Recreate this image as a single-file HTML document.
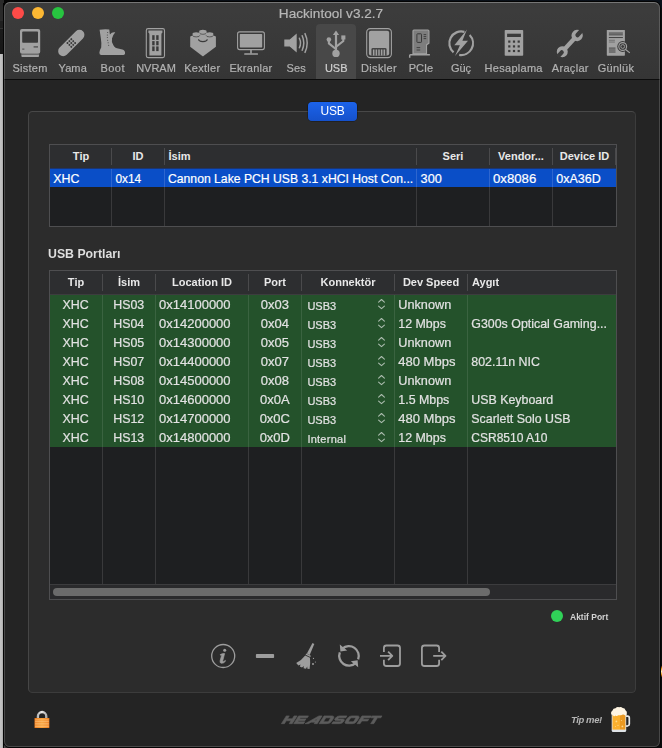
<!DOCTYPE html>
<html>
<head>
<meta charset="utf-8">
<title>Hackintool v3.2.7</title>
<style>
*{box-sizing:border-box;margin:0;padding:0}
html,body{width:662px;height:748px;overflow:hidden;background:#bdbdbd;font-family:"Liberation Sans",sans-serif;color:#dcdcdc}
.abs{position:absolute}
#win{opacity:.9999}
#bg-top{left:3px;top:0;width:659px;height:8px;background:linear-gradient(90deg,#050505 0,#0a0f16 30%,#0a111a 100%)}
#bg-l1{left:0;top:0;width:4px;height:21px;background:#2a2a2a}
#bg-l2{left:0;top:21px;width:4px;height:33px;background:linear-gradient(#1f1f1f 0,#1f1f1f 7px,#333 7px,#333 8px,#1b1b1b 8px,#161616 100%)}
#bg-l3{left:3px;top:3px;width:1px;height:745px;background:#050505}
#bg-left{left:0;top:53.5px;width:3px;height:695px;background:linear-gradient(90deg,#c4c4c4 0,#bdbdbd 60%,#a5a5a5 100%)}
#bg-right{left:659px;top:0;width:3px;height:748px;background:#0b0c0d}
#bg-bot{left:3px;top:740px;width:659px;height:8px;background:linear-gradient(90deg,#5a5a5a 0,#333 3px,#0b0c0d 8px)}
#glow{left:659px;top:664px;width:3px;height:15px;background:radial-gradient(ellipse 2.500px 6px at 2.500px 7.500px,#fff3c0 0,#f0a020 45%,#7a3a08 75%,rgba(11,12,13,0) 100%)}
#win{left:4px;top:2px;width:656px;height:745px;background:#242424;border-radius:6px 6px 5.5px 5.5px;overflow:hidden;box-shadow:0 0 0 1px #050505}
#winhl{left:4px;top:2px;width:656px;height:745px;border-radius:6px 6px 5.5px 5.5px;border:1px solid rgba(255,255,255,.17);border-top-color:rgba(255,255,255,.3);pointer-events:none}
#tb{left:0;top:0;width:656px;height:78px;background:linear-gradient(#3d3d3d,#353535);border-bottom:1px solid #0c0c0c}
#title{left:-1px;top:4px;width:656px;text-align:center;font-size:13.6px;line-height:16px;color:#b7b7b7}
.tl{width:12px;height:12px;border-radius:50%;top:5px}
.lb{top:59px;width:0;height:14px;font-size:11px;line-height:14px;color:#b2b2b2;white-space:nowrap;display:flex;justify-content:center}
#sel{left:312px;top:22px;width:40px;height:55px;background:#484848;border-radius:4px 4px 0 0}
#box{left:24px;top:109px;width:608px;height:582px;background:#2c2c2c;border:1px solid #3c3c3c;border-top-color:#484848;border-left-color:#464646;border-radius:4.5px}
#tab{left:304px;top:100px;width:49px;height:19px;background:linear-gradient(#1c63ea,#1551cb);border-radius:4px;box-shadow:0 0 0 .5px rgba(0,0,0,.5);color:#fff;font-size:12px;letter-spacing:-.3px;line-height:19px;text-align:center}
#aktif{font-size:8.5px;font-weight:bold;line-height:12px;color:#d2d2d2;white-space:nowrap}
#tipme{font-size:9.5px;letter-spacing:-.4px;font-weight:bold;font-style:italic;line-height:12px;color:#b4b4b4;white-space:nowrap}
.c,.lb,#title{-webkit-text-stroke:.2px currentColor}
#pg,#pg2{left:-4px;top:-2px;width:662px;height:748px}
.tbl{background:#1e1f21;border:1px solid #4e4e50}
.th{height:23px;line-height:22px;font-size:11px;font-weight:bold;color:#e8e8e8;white-space:nowrap}
.ctr{width:0;display:flex;justify-content:center}
.c{height:19px;line-height:21px;font-size:12.4px;color:#e2e2e2;white-space:nowrap}
.c.n{font-size:13px;line-height:19px}
.c.s{font-size:11px}
.c.w{color:#fff;height:18px;line-height:20.5px}
#ports{font-size:12.3px;font-weight:bold;line-height:16px;color:#dedede;white-space:nowrap}
</style>
</head>
<body>
<div class="abs" id="bg-right"></div>
<div class="abs" id="bg-bot"></div>
<div class="abs" id="bg-top"></div>
<div class="abs" id="bg-l1"></div>
<div class="abs" id="bg-l2"></div>
<div class="abs" id="bg-left"></div>
<div class="abs" id="bg-l3"></div>
<div class="abs" id="glow"></div>
<div class="abs" id="win">
  <div class="abs" id="tb"></div>
  <div class="abs" id="title">Hackintool v3.2.7</div>
  <div class="abs tl" style="left:8px;background:#fd4b48"></div>
  <div class="abs tl" style="left:28px;background:#fcb833"></div>
  <div class="abs tl" style="left:48px;background:#27c440"></div>
  <div class="abs" id="sel"></div>
  <!--TOOLBAR-->
  <svg class="abs" style="left:-4px;top:-2px" width="662" height="90" viewBox="0 0 662 90" fill="#a1a1a1">
    <!-- Sistem -->
    <g>
      <rect x="20" y="29" width="20.2" height="24.8" rx="2"/>
      <rect x="22.2" y="31.6" width="15.8" height="11.2" rx="0.8" fill="#3a3a3a"/>
      <rect x="33.6" y="46.2" width="4.4" height="1.4" fill="#3a3a3a" opacity=".75"/>
      <rect x="22.2" y="48.6" width="2.2" height="1" fill="#3a3a3a" opacity=".8"/>
      <path d="M21.2 54.5h18l-.5 2.4h-17z"/>
    </g>
    <!-- Yama -->
    <g transform="rotate(-45 71.3 43)">
      <rect x="54.8" y="38" width="33" height="10" rx="5"/>
      <g fill="#3a3a3a">
        <circle cx="68.6" cy="40.3" r="1"/><circle cx="71.3" cy="40.3" r="1"/><circle cx="74" cy="40.3" r="1"/>
        <circle cx="68.6" cy="43" r="1"/><circle cx="71.3" cy="43" r="1"/><circle cx="74" cy="43" r="1"/>
        <circle cx="68.6" cy="45.7" r="1"/><circle cx="71.3" cy="45.7" r="1"/><circle cx="74" cy="45.7" r="1"/>
      </g>
    </g>
    <!-- Boot -->
    <g>
      <path d="M99.6 29.8Q104 29 109.3 29.5L109.9 34.4Q112 31.6 115.3 32.3Q112.7 35.2 112 38.4Q111.6 42 112.6 43.5Q114 47.5 117 48.3L122.4 49.5Q125.3 50.5 125.1 53.2Q125 55 123.5 55L101 55Q99.2 54.6 99.4 52.4Q99.6 50.3 101.2 47.5Q101.8 44 100.8 38Q100 33 99.6 29.8Z"/>
      <g fill="#3a3a3a"><circle cx="107.7" cy="32.4" r=".5"/><circle cx="107.3" cy="35" r=".5"/><circle cx="107.3" cy="37.6" r=".5"/><circle cx="107.7" cy="40.2" r=".5"/><circle cx="108.1" cy="42.8" r=".5"/><circle cx="108.7" cy="45.3" r=".5"/></g>
    </g>
    <!-- NVRAM -->
    <g>
      <rect x="146.3" y="28.6" width="18.2" height="29" rx="1.8" fill="none" stroke="#a1a1a1" stroke-width="1.1"/>
      <path d="M148.4 30.6h14v2.2q-1 .4-1 1.6v21.2h-12v-21.2q0-1.2-1-1.6z"/>
      <g fill="#3a3a3a">
        <rect x="152.2" y="35.2" width="2.4" height="4.7"/><rect x="156.2" y="35.2" width="2.4" height="4.7"/>
        <rect x="152.2" y="41.1" width="2.4" height="4.2"/><rect x="156.2" y="41.1" width="2.4" height="4.2"/>
        <rect x="152.2" y="46.4" width="2.4" height="4.7"/><rect x="156.2" y="46.4" width="2.4" height="4.7"/>
      </g>
    </g>
    <!-- Kextler -->
    <g>
      <path d="M190.2 36.4L202.9 31L215.9 36.4V46.8L203.5 56Q202.9 56.4 202.3 56L190.2 46.8Z"/>
      <path d="M199.3 31.25a3.6 1.55 0 0 1 7.2 0v1.3a3.6 1.55 0 0 1 -7.2 0z"/>
      <path d="M199.3 32.74999999999999a3.6 1.55 0 0 0 7.2 0" fill="none" stroke="#3a3a3a" stroke-width="0.7"/>
      <path d="M192.6 33.85a3.6 1.55 0 0 1 7.2 0v1.3a3.6 1.55 0 0 1 -7.2 0z"/>
      <path d="M192.6 35.349999999999994a3.6 1.55 0 0 0 7.2 0" fill="none" stroke="#3a3a3a" stroke-width="0.7"/>
      <path d="M206.1 33.85a3.6 1.55 0 0 1 7.2 0v1.3a3.6 1.55 0 0 1 -7.2 0z"/>
      <path d="M206.1 35.349999999999994a3.6 1.55 0 0 0 7.2 0" fill="none" stroke="#3a3a3a" stroke-width="0.7"/>
      <path d="M198.6 39.349999999999994a4.3 2.2 0 0 0 8.6 0" fill="none" stroke="#3a3a3a" stroke-width="1.2"/>
    </g>
    <!-- Ekranlar -->
    <g>
      <rect x="237.6" y="31.9" width="26.8" height="17.7" rx="2" fill="none" stroke="#a1a1a1" stroke-width="1.1"/>
      <rect x="239.8" y="34.1" width="22.4" height="13.3" rx=".6"/>
      <rect x="250.2" y="50" width="1.6" height="3.6"/>
      <rect x="244.2" y="53.2" width="13.8" height="1.5" rx=".5"/>
    </g>
    <!-- Ses -->
    <g>
      <path d="M284.3 39.6h5.4l7-6v18.8l-7-6h-5.4z"/>
      <g fill="none" stroke="#a1a1a1" stroke-width="1.5" stroke-linecap="round">
        <path d="M299.4 38.2Q301.6 43 299.4 47.8"/>
        <path d="M302.2 35.8Q305.4 43 302.2 50.2"/>
        <path d="M305 33.6Q309.4 43 305 52.4"/>
      </g>
    </g>
    <!-- USB -->
    <g>
      <path d="M336 30.6l3.1 4.4h-2v15.2h-2.2v-15.2h-2z"/>
      <circle cx="336" cy="53.4" r="3.7"/>
      <circle cx="328.9" cy="39.6" r="2.3"/>
      <rect x="341.3" y="35.4" width="4.1" height="4.1"/>
      <path d="M328.9 40v3.4l6.6 5.4M343.3 38v3.1l-6.8 5.4" fill="none" stroke="#a1a1a1" stroke-width="2.1"/>
    </g>
    <!-- Diskler -->
    <g>
      <rect x="366.7" y="28.6" width="24.7" height="29" rx="3.6" fill="none" stroke="#a1a1a1" stroke-width="1.1"/>
      <rect x="368.9" y="30.8" width="20.3" height="24.6" rx="2"/>
      <path d="M371.4 55.4v-6q0-1.4 1.4-1.4h12.4q1.4 0 1.4 1.4v6" fill="#3a3a3a" opacity=".9"/>
      <path d="M373.7 49.5v5.9M376.35 49.5v5.9M379 49.5v5.9M381.65 49.5v5.9M384.3 49.5v5.9" stroke="#a1a1a1" stroke-width="1.5" fill="none"/>
    </g>
    <!-- PCIe -->
    <g>
      <path d="M412.4 54.2V31q0-1.5 1.5-1.5h14q1.6 0 1.6 1.5v12.4l-2.4 1.8V54.2" />
      <path d="M413.6 53.2V31.4q0-.8 .8-.8h13.2q.8 0 .8.8v11.4l-2.4 1.8V53.2z" fill="#3a3a3a" opacity=".35"/>
      <rect x="416.9" y="33.8" width="4.6" height="8.6" rx=".6" fill="none" stroke="#3a3a3a" stroke-width="1"/>
      <path d="M423.6 34.6h2.6M423.6 36.6h2.6M423.6 38.6h2.6M416.6 47.6h3.6M416.6 50h3.6" stroke="#3a3a3a" stroke-width=".9" fill="none"/>
      <path d="M409.7 57.8v-2.2q0-.8.8-.8h19.4" fill="none" stroke="#a1a1a1" stroke-width="1.5"/>
    </g>
    <!-- Guc -->
    <g>
      <path d="M464.4 31.9A11.8 11.8 0 0 0 453.56 52.29M469.64 35.05A11.8 11.8 0 0 1 459.2 54.89" fill="none" stroke="#a1a1a1" stroke-width="2.2"/>
      <path d="M467 29.5L454.3 45.2h5.6L455 55.9L468 40.7h-5.6z"/>
    </g>
    <!-- Hesaplama -->
    <g>
      <rect x="504.7" y="29.9" width="18.5" height="25.8" rx=".8"/>
      <g fill="#3a3a3a">
        <rect x="507.1" y="33.7" width="13.8" height="3.3"/>
        <rect x="508.2" y="40.5" width="2.2" height="2.2"/><rect x="512.9" y="40.5" width="2.2" height="2.2"/><rect x="517.6" y="40.5" width="2.2" height="2.2"/>
        <rect x="508.2" y="45.3" width="2.2" height="2.2"/><rect x="512.9" y="45.3" width="2.2" height="2.2"/><rect x="517.6" y="45.3" width="2.2" height="2.2"/>
        <rect x="508.2" y="49.9" width="2.2" height="2.2"/><rect x="512.9" y="49.9" width="2.2" height="2.2"/><rect x="517.6" y="49.9" width="2.2" height="2.2"/>
      </g>
    </g>
    <!-- Araclar -->
    <g transform="translate(569.7 43.6) rotate(-47.5)">
      <rect x="-11" y="-2.1" width="22" height="4.2"/>
      <circle cx="11" cy="0" r="5.7"/>
      <circle cx="-11" cy="0" r="5.5"/>
      <path d="M18 -2.2h-6.4a2.2 2.2 0 0 0 0 4.4h6.4z" fill="#3a3a3a"/>
      <path d="M-18 -2.1h6.2a2.1 2.1 0 0 1 0 4.2h-6.2z" fill="#3a3a3a"/>
    </g>
    <!-- Gunluk -->
    <g>
      <rect x="606.8" y="29.9" width="18.1" height="25.8" rx=".6"/>
      <path d="M608.9 33.05h14M608.9 34.85h14M608.9 37.55h14M608.9 48.1h6.6M608.9 50h6.6M608.9 52h6.6" stroke="#383838" stroke-width=".9" fill="none"/>
      <path d="M608.9 40.25h6M608.9 42.05h6" stroke="#383838" stroke-width=".9" fill="none" opacity=".5"/>
      <circle cx="622.7" cy="46.5" r="5.4" fill="#3a3a3a"/>
      <path d="M625.6 49.6l4.4 3.6" stroke="#3a3a3a" stroke-width="2.6" fill="none"/>
      <circle cx="622.7" cy="46.5" r="3.9" fill="none" stroke="#a1a1a1" stroke-width="1.1"/>
      <circle cx="622.7" cy="46.5" r="1.9" fill="none" stroke="#a1a1a1" stroke-width=".9"/>
      <path d="M625.6 49.5l4.2 3.4" stroke="#a1a1a1" stroke-width="1.1" fill="none"/>
    </g>
  </svg>
  <div class="abs lb" style="left:26px;letter-spacing:0.25px">Sistem</div>
  <div class="abs lb" style="left:68.7px;letter-spacing:0.1px">Yama</div>
  <div class="abs lb" style="left:108.7px;letter-spacing:.45px">Boot</div>
  <div class="abs lb" style="left:152px">NVRAM</div>
  <div class="abs lb" style="left:198.3px;letter-spacing:0.3px">Kextler</div>
  <div class="abs lb" style="left:247.0px;letter-spacing:0.25px">Ekranlar</div>
  <div class="abs lb" style="left:292.2px;letter-spacing:0.1px">Ses</div>
  <div class="abs lb" style="left:332.2px;color:#cfcfcf">USB</div>
  <div class="abs lb" style="left:375.0px;letter-spacing:0.35px">Diskler</div>
  <div class="abs lb" style="left:417px">PCIe</div>
  <div class="abs lb" style="left:457.0px">Güç</div>
  <div class="abs lb" style="left:509.7px;letter-spacing:0.28px">Hesaplama</div>
  <div class="abs lb" style="left:566.3px;letter-spacing:0.3px">Araçlar</div>
  <div class="abs lb" style="left:612.0px;letter-spacing:0.3px">Günlük</div>
  <!--/TOOLBAR-->
  <div class="abs" id="box"></div>
  <div class="abs" id="tab">USB</div>
  <!--TABLES-->
  <div class="abs" id="pg">
    <div class="abs tbl" style="left:49px;top:144px;width:568px;height:83px"></div>
    <div class="abs" style="left:50px;top:145px;width:566px;height:23px;background:#2d2e30"></div>
    <div class="abs" style="left:50px;top:169px;width:566px;height:18px;background:#0a4ec7"></div>
    <div class="abs" style="left:50px;top:168px;width:566px;height:1px;background:#1c3570"></div>
    <div class="abs" style="left:111px;top:148px;width:1px;height:17px;background:#4a4a4c"></div>
    <div class="abs" style="left:111px;top:169px;width:1px;height:57px;background:#39393b"></div>
    <div class="abs" style="left:111px;top:169px;width:1px;height:18px;background:#2e66cf"></div>
    <div class="abs" style="left:164px;top:148px;width:1px;height:17px;background:#4a4a4c"></div>
    <div class="abs" style="left:164px;top:169px;width:1px;height:57px;background:#39393b"></div>
    <div class="abs" style="left:164px;top:169px;width:1px;height:18px;background:#2e66cf"></div>
    <div class="abs" style="left:416px;top:148px;width:1px;height:17px;background:#4a4a4c"></div>
    <div class="abs" style="left:416px;top:169px;width:1px;height:57px;background:#39393b"></div>
    <div class="abs" style="left:416px;top:169px;width:1px;height:18px;background:#2e66cf"></div>
    <div class="abs" style="left:489px;top:148px;width:1px;height:17px;background:#4a4a4c"></div>
    <div class="abs" style="left:489px;top:169px;width:1px;height:57px;background:#39393b"></div>
    <div class="abs" style="left:489px;top:169px;width:1px;height:18px;background:#2e66cf"></div>
    <div class="abs" style="left:552px;top:148px;width:1px;height:17px;background:#4a4a4c"></div>
    <div class="abs" style="left:552px;top:169px;width:1px;height:57px;background:#39393b"></div>
    <div class="abs" style="left:552px;top:169px;width:1px;height:18px;background:#2e66cf"></div>
    <div class="abs" style="left:615px;top:148px;width:1px;height:17px;background:#4a4a4c"></div>
    <div class="abs th ctr" style="left:81px;top:145px">Tip</div>
    <div class="abs th ctr" style="left:138px;top:145px">ID</div>
    <div class="abs th" style="left:168.5px;top:145px">İsim</div>
    <div class="abs th ctr" style="left:453px;top:145px">Seri</div>
    <div class="abs th ctr" style="left:521px;top:145px">Vendor...</div>
    <div class="abs th ctr" style="left:584.5px;top:145px">Device ID</div>
    <div class="abs c w" style="left:53.2px;top:169px">XHC</div>
    <div class="abs c w" style="left:115.4px;top:169px;font-size:11.9px">0x14</div>
    <div class="abs c w" style="left:168px;top:169px;font-size:12.2px">Cannon Lake PCH USB 3.1 xHCI Host Con...</div>
    <div class="abs c w" style="left:420.6px;top:169px;font-size:12.7px">300</div>
    <div class="abs c w" style="left:493px;top:169px;font-size:13.2px">0x8086</div>
    <div class="abs c w" style="left:556.2px;top:169px;font-size:12.5px">0xA36D</div>
    <div class="abs" id="ports" style="left:48px;top:246px">USB Portları</div>
    <div class="abs tbl" style="left:49px;top:270px;width:568px;height:330px"></div>
    <div class="abs" style="left:50px;top:271px;width:566px;height:23px;background:#2d2e30"></div>
    <div class="abs" style="left:50px;top:294px;width:566px;height:1px;background:#3c3c3e"></div>
    <div class="abs" style="left:50px;top:295px;width:566px;height:152px;background:#24522b"></div>
    <div class="abs" style="left:102px;top:274px;width:1px;height:17px;background:#4a4a4c"></div>
    <div class="abs" style="left:102px;top:295px;width:1px;height:289px;background:#39393b"></div>
    <div class="abs" style="left:102px;top:295px;width:1px;height:152px;background:#3a6340"></div>
    <div class="abs" style="left:155px;top:274px;width:1px;height:17px;background:#4a4a4c"></div>
    <div class="abs" style="left:155px;top:295px;width:1px;height:289px;background:#39393b"></div>
    <div class="abs" style="left:155px;top:295px;width:1px;height:152px;background:#3a6340"></div>
    <div class="abs" style="left:248px;top:274px;width:1px;height:17px;background:#4a4a4c"></div>
    <div class="abs" style="left:248px;top:295px;width:1px;height:289px;background:#39393b"></div>
    <div class="abs" style="left:248px;top:295px;width:1px;height:152px;background:#3a6340"></div>
    <div class="abs" style="left:301px;top:274px;width:1px;height:17px;background:#4a4a4c"></div>
    <div class="abs" style="left:301px;top:295px;width:1px;height:289px;background:#39393b"></div>
    <div class="abs" style="left:301px;top:295px;width:1px;height:152px;background:#3a6340"></div>
    <div class="abs" style="left:394px;top:274px;width:1px;height:17px;background:#4a4a4c"></div>
    <div class="abs" style="left:394px;top:295px;width:1px;height:289px;background:#39393b"></div>
    <div class="abs" style="left:394px;top:295px;width:1px;height:152px;background:#3a6340"></div>
    <div class="abs" style="left:467px;top:274px;width:1px;height:17px;background:#4a4a4c"></div>
    <div class="abs" style="left:467px;top:295px;width:1px;height:289px;background:#39393b"></div>
    <div class="abs" style="left:467px;top:295px;width:1px;height:152px;background:#3a6340"></div>
    <div class="abs" style="left:50px;top:584px;width:566px;height:1px;background:#3c3c3e"></div>
    <div class="abs" style="left:50px;top:585px;width:566px;height:14px;background:#2a2a2c"></div>
    <div class="abs" style="left:53px;top:588px;width:437px;height:8px;border-radius:4px;background:#6b6b6b"></div>
    <div class="abs th ctr" style="left:76px;top:271px">Tip</div>
    <div class="abs th ctr" style="left:129px;top:271px">İsim</div>
    <div class="abs th ctr" style="left:202px;top:271px">Location ID</div>
    <div class="abs th ctr" style="left:275px;top:271px">Port</div>
    <div class="abs th ctr" style="left:348px;top:271px">Konnektör</div>
    <div class="abs th ctr" style="left:431px;top:271px">Dev Speed</div>
    <div class="abs th" style="left:472px;top:271px">Aygıt</div>
    <div class="abs c ctr" style="left:75.5px;top:295px">XHC</div>
    <div class="abs c ctr" style="left:128.7px;top:295px">HS03</div>
    <div class="abs c n" style="left:159px;top:295px">0x14100000</div>
    <div class="abs c n ctr" style="left:274.8px;top:295px">0x03</div>
    <div class="abs c s" style="left:307.4px;top:296px">USB3</div>
    <div class="abs c" style="left:398.3px;top:295px;font-size:12.7px">Unknown</div>
    <svg class="abs" style="left:377px;top:298px" width="9" height="12" viewBox="0 0 9 12"><path d="M1.6 4.1L4.5 1.5L7.4 4.1M1.6 8.1L4.5 10.7L7.4 8.1" fill="none" stroke="#c3cfc5" stroke-width="1.1" stroke-linecap="round" stroke-linejoin="round" opacity=".85"/></svg>
    <div class="abs c ctr" style="left:75.5px;top:314px">XHC</div>
    <div class="abs c ctr" style="left:128.7px;top:314px">HS04</div>
    <div class="abs c n" style="left:159px;top:314px">0x14200000</div>
    <div class="abs c n ctr" style="left:274.8px;top:314px">0x04</div>
    <div class="abs c s" style="left:307.4px;top:315px">USB3</div>
    <div class="abs c" style="left:398.3px;top:314px">12 Mbps</div>
    <div class="abs c" style="left:471.3px;top:314px">G300s Optical Gaming...</div>
    <svg class="abs" style="left:377px;top:317px" width="9" height="12" viewBox="0 0 9 12"><path d="M1.6 4.1L4.5 1.5L7.4 4.1M1.6 8.1L4.5 10.7L7.4 8.1" fill="none" stroke="#c3cfc5" stroke-width="1.1" stroke-linecap="round" stroke-linejoin="round" opacity=".85"/></svg>
    <div class="abs c ctr" style="left:75.5px;top:333px">XHC</div>
    <div class="abs c ctr" style="left:128.7px;top:333px">HS05</div>
    <div class="abs c n" style="left:159px;top:333px">0x14300000</div>
    <div class="abs c n ctr" style="left:274.8px;top:333px">0x05</div>
    <div class="abs c s" style="left:307.4px;top:334px">USB3</div>
    <div class="abs c" style="left:398.3px;top:333px;font-size:12.7px">Unknown</div>
    <svg class="abs" style="left:377px;top:336px" width="9" height="12" viewBox="0 0 9 12"><path d="M1.6 4.1L4.5 1.5L7.4 4.1M1.6 8.1L4.5 10.7L7.4 8.1" fill="none" stroke="#c3cfc5" stroke-width="1.1" stroke-linecap="round" stroke-linejoin="round" opacity=".85"/></svg>
    <div class="abs c ctr" style="left:75.5px;top:352px">XHC</div>
    <div class="abs c ctr" style="left:128.7px;top:352px">HS07</div>
    <div class="abs c n" style="left:159px;top:352px">0x14400000</div>
    <div class="abs c n ctr" style="left:274.8px;top:352px">0x07</div>
    <div class="abs c s" style="left:307.4px;top:353px">USB3</div>
    <div class="abs c" style="left:398.3px;top:352px;font-size:13px;line-height:20px">480 Mbps</div>
    <div class="abs c" style="left:471.3px;top:352px">802.11n NIC</div>
    <svg class="abs" style="left:377px;top:355px" width="9" height="12" viewBox="0 0 9 12"><path d="M1.6 4.1L4.5 1.5L7.4 4.1M1.6 8.1L4.5 10.7L7.4 8.1" fill="none" stroke="#c3cfc5" stroke-width="1.1" stroke-linecap="round" stroke-linejoin="round" opacity=".85"/></svg>
    <div class="abs c ctr" style="left:75.5px;top:371px">XHC</div>
    <div class="abs c ctr" style="left:128.7px;top:371px">HS08</div>
    <div class="abs c n" style="left:159px;top:371px">0x14500000</div>
    <div class="abs c n ctr" style="left:274.8px;top:371px">0x08</div>
    <div class="abs c s" style="left:307.4px;top:372px">USB3</div>
    <div class="abs c" style="left:398.3px;top:371px;font-size:12.7px">Unknown</div>
    <svg class="abs" style="left:377px;top:374px" width="9" height="12" viewBox="0 0 9 12"><path d="M1.6 4.1L4.5 1.5L7.4 4.1M1.6 8.1L4.5 10.7L7.4 8.1" fill="none" stroke="#c3cfc5" stroke-width="1.1" stroke-linecap="round" stroke-linejoin="round" opacity=".85"/></svg>
    <div class="abs c ctr" style="left:75.5px;top:390px">XHC</div>
    <div class="abs c ctr" style="left:128.7px;top:390px">HS10</div>
    <div class="abs c n" style="left:159px;top:390px">0x14600000</div>
    <div class="abs c n ctr" style="left:274.8px;top:390px">0x0A</div>
    <div class="abs c s" style="left:307.4px;top:391px">USB3</div>
    <div class="abs c" style="left:398.3px;top:390px">1.5 Mbps</div>
    <div class="abs c" style="left:471.3px;top:390px">USB Keyboard</div>
    <svg class="abs" style="left:377px;top:393px" width="9" height="12" viewBox="0 0 9 12"><path d="M1.6 4.1L4.5 1.5L7.4 4.1M1.6 8.1L4.5 10.7L7.4 8.1" fill="none" stroke="#c3cfc5" stroke-width="1.1" stroke-linecap="round" stroke-linejoin="round" opacity=".85"/></svg>
    <div class="abs c ctr" style="left:75.5px;top:409px">XHC</div>
    <div class="abs c ctr" style="left:128.7px;top:409px">HS12</div>
    <div class="abs c n" style="left:159px;top:409px">0x14700000</div>
    <div class="abs c n ctr" style="left:274.8px;top:409px">0x0C</div>
    <div class="abs c s" style="left:307.4px;top:410px">USB3</div>
    <div class="abs c" style="left:398.3px;top:409px;font-size:13px;line-height:20px">480 Mbps</div>
    <div class="abs c" style="left:471.3px;top:409px">Scarlett Solo USB</div>
    <svg class="abs" style="left:377px;top:412px" width="9" height="12" viewBox="0 0 9 12"><path d="M1.6 4.1L4.5 1.5L7.4 4.1M1.6 8.1L4.5 10.7L7.4 8.1" fill="none" stroke="#c3cfc5" stroke-width="1.1" stroke-linecap="round" stroke-linejoin="round" opacity=".85"/></svg>
    <div class="abs c ctr" style="left:75.5px;top:428px">XHC</div>
    <div class="abs c ctr" style="left:128.7px;top:428px">HS13</div>
    <div class="abs c n" style="left:159px;top:428px">0x14800000</div>
    <div class="abs c n ctr" style="left:274.8px;top:428px">0x0D</div>
    <div class="abs c s" style="left:307.4px;top:429px;letter-spacing:.25px">Internal</div>
    <div class="abs c" style="left:398.3px;top:428px">12 Mbps</div>
    <div class="abs c" style="left:471.3px;top:428px;font-size:12px">CSR8510 A10</div>
    <svg class="abs" style="left:377px;top:431px" width="9" height="12" viewBox="0 0 9 12"><path d="M1.6 4.1L4.5 1.5L7.4 4.1M1.6 8.1L4.5 10.7L7.4 8.1" fill="none" stroke="#c3cfc5" stroke-width="1.1" stroke-linecap="round" stroke-linejoin="round" opacity=".85"/></svg>
  </div>
  <!--/TABLES-->
  <!--BOTTOMS-->
  <div class="abs" id="pg2">
    <div class="abs" style="left:551px;top:610px;width:12px;height:12px;border-radius:50%;background:#30d158"></div>
    <div class="abs" id="aktif" style="left:570px;top:611.2px">Aktif Port</div>
    <svg class="abs" style="left:200px;top:636px" width="260" height="40" viewBox="200 636 260 40" fill="#9d9d9d">
  <circle cx="223.2" cy="656" r="11.5" fill="none" stroke="#9d9d9d" stroke-width="1.3"/>
  <circle cx="224.7" cy="650.3" r="1.5"/>
  <path stroke="#9d9d9d" stroke-width=".7" stroke-linejoin="round" d="M220.3 654.6Q222.6 653.2 224.6 653.6L222.8 660.6Q222.6 661.8 223.6 661.6Q224.4 661.2 225.2 660.4L225.7 660.9Q223.8 663.4 221.6 663.3Q219.6 663.1 220.1 660.9L221.5 655.6Q221.7 654.8 220.4 655.2Z"/>
  <rect x="255.9" y="653.9" width="18.2" height="4.2" rx=".8"/>
  <!-- broom -->
  <path d="M312.5 643.1L314.3 643.9L309.7 654.9L306.9 653.5Z"/>
  <path d="M306.3 653.4L310.9 655.7L310.3 657L305.6 654.7Z"/>
  <path d="M305.2 655.4L310 657.8Q310.6 663.5 309.6 669L307.4 668.8L307.2 666.6L306 668.7L303.6 668.2L303.8 666L302 667.6L299.8 666.4L300.6 664.6L298.4 665.4L296.2 663Q301.4 660.4 305.2 655.4Z"/>
  <circle cx="313.5" cy="658.4" r=".6"/><circle cx="315.4" cy="662" r=".6"/><circle cx="313" cy="663.9" r="1"/>
  <!-- refresh -->
  <g fill="none" stroke="#9d9d9d" stroke-width="2.3">
    <path d="M358.16 659.38A9.8 9.8 0 0 0 342.4 648.7"/>
    <path d="M339.84 652.42A9.8 9.8 0 0 0 355.6 663.1"/>
  </g>
  <path d="M339.8 644.6L340.4 651.6L347.2 650.6Z"/>
  <path d="M358.2 667.2L357.6 660.2L350.8 661.2Z"/>
  <!-- import -->
  <g fill="none" stroke="#9d9d9d" stroke-width="1.8" stroke-linejoin="round">
    <path d="M383.9 652V648q0-2.5 2.5-2.5h11.1q2.5 0 2.5 2.5v15.5q0 2.500 -2.5 2.500h-11.100q-2.5 0 -2.5 -2.5V659.800"/>
    <path d="M380 655.9h11.6M388.1 651.700L392.300 655.900L388.100 660.100"/>
    <path d="M439.100 652V648q0-2.5 -2.5-2.5h-12.200q-2.5 0 -2.5 2.500v15.500q0 2.500 2.500 2.500h12.200q2.500 0 2.500 -2.500V659.800"/>
    <path d="M433.200 655.900h11.600M441.300 651.700L445.500 655.900L441.300 660.100"/>
  </g>
</svg>
    <svg class="abs" style="left:30px;top:706px" width="26" height="28" viewBox="30 706 26 28">
  <defs><linearGradient id="sh" x1="0" x2="1"><stop offset="0" stop-color="#b9b9b9"/><stop offset=".45" stop-color="#ededed"/><stop offset="1" stop-color="#b0b0b0"/></linearGradient>
  <linearGradient id="lk" x1="0" x2="1"><stop offset="0" stop-color="#ee7a1c"/><stop offset=".5" stop-color="#f9a136"/><stop offset="1" stop-color="#ee7a1c"/></linearGradient></defs>
  <path d="M37.900 718.5V716.200a4.200 4.200 0 0 1 8.400 0V718.500" fill="none" stroke="url(#sh)" stroke-width="2.300"/>
  <rect x="34.700" y="717.900" width="14.500" height="10.200" rx=".6" fill="url(#lk)"/>
  <path d="M35.100 719.900h13.700M35.100 721.600h13.700M35.100 723.300h13.700M35.100 724.950h13.700M35.100 726.600h13.700" stroke="#ffc884" stroke-width=".75" opacity=".9"/>
</svg>
    <svg class="abs" style="left:278px;top:713px" width="108" height="14" viewBox="278 713 108 14"><g transform="translate(281.4 723.700) skewX(-32) scale(.948 1)" fill="#5c5c5c" stroke="#5c5c5c" stroke-width=".55">
  <path d="M0 0V-7.800h3.200v2.900h5V-7.800h3.200V0H8.200V-2.900h-5V0z"/>
  <path d="M13 0V-7.800h10.400v1.900H16.200v1.100h6.600v1.800H16.200v1.100h7.200V0z" transform="translate(0 0)"/>
  <path d="M25 0L34.500 -7.800h3.300V0h-3.200v-1.500h-4.300L28.500 0zM32.400 -3.100h2.200V-5z"/>
  <path d="M39.800 0V-7.800h8.200q3.400 0 3.400 2.600v2.600Q51.400 0 48 0zM43 -1.900h4.200q1 0 1-1v-2q0-1 -1-1H43z"/>
  <path d="M53.200 0v-1.900h7q.9 0 .9-.6t-.9-.6h-4.200q-2.800 0-2.800-2.300T56-7.800h8v1.900h-6.800q-.9 0-.9.600t.9.600h4.200q2.900 0 2.900 2.300T61.400 0z"/>
  <path d="M69 0Q66 0 66-2.600v-2.600Q66-7.800 69-7.800h6q3 0 3 2.600v2.600Q78 0 75 0zM70.200-1.900h3.600q1 0 1-1v-2q0-1-1-1h-3.600q-1 0-1 1v2q0 1 1 1z"/>
  <path d="M79.800 0V-7.800h10v1.900h-6.800v1.400h6.200v1.800h-6.200V0z"/>
  <path d="M90.600-7.800h10.400v1.900h-3.600V0h-3.200V-5.900h-3.600z"/>
</g></svg>
    <div class="abs" id="tipme" style="left:571px;top:713.6px">Tip me!</div>
    <svg class="abs" style="left:606px;top:704px" width="28" height="32" viewBox="606 704 28 32">
  <path d="M626 716.200h1.600q1.700 0 1.700 1.700v6q0 1.500 -1.500 1.900L626 726.200" fill="none" stroke="#e9e9e9" stroke-width="1.700"/>
  <path d="M611.700 714h14.500v16.600q0 1.500 -1.500 1.500h-11.500q-1.500 0 -1.500 -1.500z" fill="#dfe3e6"/>
  <rect x="612.500" y="714.500" width="7.500" height="15.100" fill="#fbb02e"/>
  <rect x="620" y="714.500" width="5.400" height="15.100" fill="#ea9820"/>
  <path d="M611.100 714.200q-.6 -2.700 1.400 -3.700q.6 -2.200 3 -2.300q1.500 -1.700 3.700 -1q2.100 -.6 3.500 .9q2.300 .1 2.800 2.200q2 1 1.300 3.600q-.1 1.700 -1.500 1.500q-1.100 -.1 -1.300 -1.100h-1.500q-.6 1.200 -1.900 1h-2.400q-1.300 1.500 -2.600 .1q-1.200 1.500 -2.300 .3q-.2 -1 -1.200 -1.200q-.500 .3 -1 -.300z" fill="#fff5e3"/>
  <g fill="#ffd98a"><circle cx="616.400" cy="721.400" r=".9"/><circle cx="618" cy="725.400" r=".6"/><circle cx="622.400" cy="726.400" r=".9"/><circle cx="621.400" cy="720.400" r=".5"/><circle cx="615.400" cy="726.600" r=".5"/></g>
</svg>
  </div>
  <!--/BOTTOMS-->
</div>
<div class="abs" id="winhl"></div>
</body>
</html>
